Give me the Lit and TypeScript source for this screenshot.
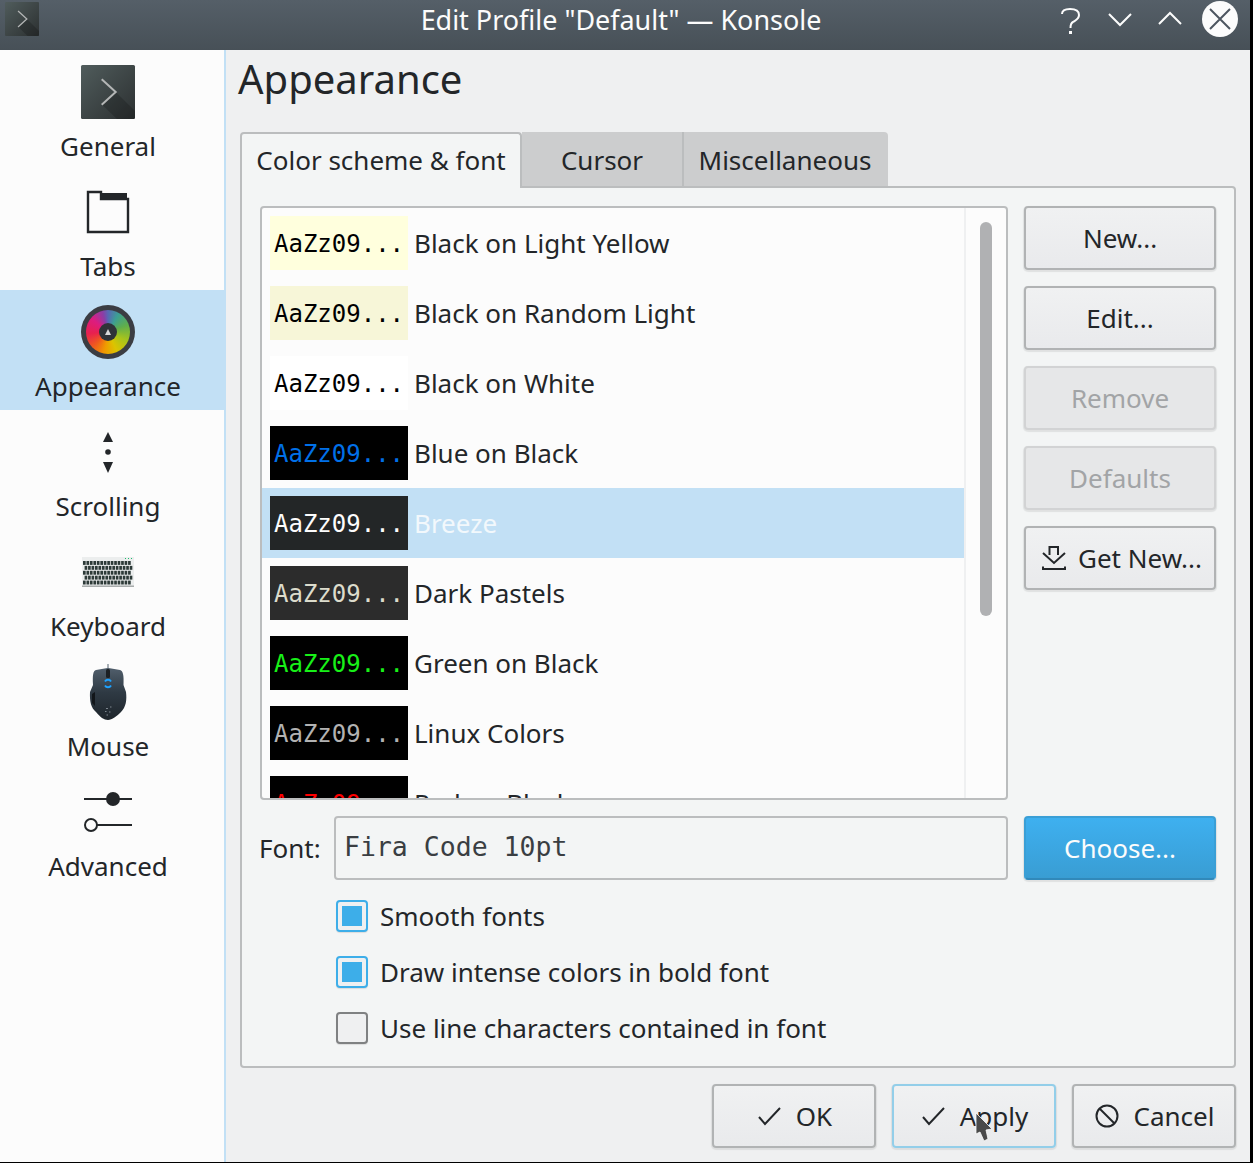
import { LitElement, html, css, svg } from 'lit';
import { customElement } from 'lit/decorators.js';
import { classMap } from 'lit/directives/class-map.js';

const schemes = [
  { name: 'Black on Light Yellow', bg: '#ffffdd', fg: '#000000' },
  { name: 'Black on Random Light', bg: '#f7f6d8', fg: '#000000' },
  { name: 'Black on White', bg: '#ffffff', fg: '#000000' },
  { name: 'Blue on Black', bg: '#000000', fg: '#0070e8' },
  { name: 'Breeze', bg: '#232627', fg: '#fcfcfc', selected: true },
  { name: 'Dark Pastels', bg: '#2c2c2c', fg: '#dcdccc' },
  { name: 'Green on Black', bg: '#000000', fg: '#18f018' },
  { name: 'Linux Colors', bg: '#000000', fg: '#b2b2b2' },
  { name: 'Red on Black', bg: '#000000', fg: '#ff0000' },
];

const check = html`<svg class="btn-icon" viewBox="0 0 24 24"><path d="M2 13L8 20L23 4" fill="none" stroke="#232629" stroke-width="2"/></svg>`;

const konsoleIcon = (cls: string) => html`<svg class=${cls} viewBox="0 0 54 54">
  <defs>
    <linearGradient id="konsole" x1="0" y1="0" x2="1" y2="1">
      <stop offset="0" stop-color="#505c5c"/>
      <stop offset="1" stop-color="#2c3031"/>
    </linearGradient>
  </defs>
  <rect width="54" height="54" rx="1.5" fill="url(#konsole)"/>
  <path d="M34.7 27L54 46V54H36L21 39.7Z" fill="#000" opacity=".18"/>
  <path d="M20.7 14.3L34.7 27L20.7 39.7" fill="none" stroke="#b4b6b6" stroke-width="2"/>
</svg>`;

// small keys of the keyboard icon, row by row
const keyRows = [0, 1, 2, 3, 4].map((row) => {
  const keys = [];
  const w = 52 / 15;
  const offset = row % 2 ? 1.6 : 0;
  for (let i = 0; i < 14; i++) {
    keys.push(svg`<rect x=${2 + offset + i * w} y=${16 + row * 4.9} width=${w - 0.8} height="3.9" fill="#2d3a38"/>`);
  }
  return keys;
});

const icons: Record<string, unknown> = {
  general: konsoleIcon('icon'),
  tabs: html`<svg class="icon" viewBox="0 0 54 54">
    <path d="M7 7H20V14H47V47H7Z" fill="#fcfcfc" stroke="#232629" stroke-width="2.4"/>
    <rect x="20" y="8" width="26" height="7" fill="#232629"/>
  </svg>`,
  appearance: html`<div class="wheel"><div class="wheel-ring"></div><div class="wheel-hub"><i class="wheel-mark"></i></div></div>`,
  scrolling: html`<svg class="icon" viewBox="0 0 54 54" fill="#232629">
    <path d="M27 7L22 17H32Z"/>
    <circle cx="27" cy="27" r="2.8"/>
    <path d="M22 37H32L27 48Z"/>
  </svg>`,
  keyboard: html`<svg class="icon" viewBox="0 0 54 54">
    <rect x="1" y="12" width="52" height="30" fill="#eceeee"/>
    <rect x="1" y="40.5" width="52" height="1.5" fill="#a8acac"/>
    ${keyRows}
    <rect x="44" y="13" width="1" height="1" fill="#1abc6c"/>
    <rect x="47" y="13" width="1" height="1" fill="#1abc6c"/>
    <rect x="50" y="13" width="1" height="1" fill="#1abc6c"/>
  </svg>`,
  mouse: html`<svg class="icon" viewBox="0 0 54 54">
    <defs>
      <linearGradient id="mouse" x1="0" y1="0" x2="0" y2="1">
        <stop offset="0" stop-color="#566472"/>
        <stop offset=".5" stop-color="#2f3a44"/>
        <stop offset="1" stop-color="#1e252b"/>
      </linearGradient>
    </defs>
    <path d="M26.5 -1V3L15 5C12 6 11.500 10 12 20L9 27C8.500 36 10 43 15 47C19 52 23 55 27 55C31 55 36 51 40 47C45 42 46 35 45 27L42.500 20C43 10 42 6 39 5L27.500 3V-1Z" fill="url(#mouse)"/>
    <rect x="25" y="4" width="4" height="9" rx="1.500" fill="#1c2024"/>
    <path d="M24 16.500A3.500 3.500 0 0 1 30 16.500M30 20.500A3.500 3.500 0 0 1 24 20.500" fill="none" stroke="#1ea2ff" stroke-width="2"/>
    <path d="M11 29L14 27V41L11 38Z" fill="#12161a"/>
    <path d="M25 43.500h2M29 42h1.500M24 46.500h1.500M28 47h1.500M25.500 50h1.500" stroke="#7c858d" stroke-width="1.200" fill="none"/>
  </svg>`,
  advanced: html`<svg class="icon" viewBox="0 0 54 54" fill="none" stroke="#232629" stroke-width="2">
    <path d="M3 14H51"/>
    <circle cx="32" cy="14" r="7" fill="#232629" stroke="none"/>
    <path d="M16 40H51"/>
    <circle cx="10" cy="40" r="6"/>
  </svg>`,
};

const pages = [
  ['general', 'General'],
  ['tabs', 'Tabs'],
  ['appearance', 'Appearance'],
  ['scrolling', 'Scrolling'],
  ['keyboard', 'Keyboard'],
  ['mouse', 'Mouse'],
  ['advanced', 'Advanced'],
];

@customElement('app-root')
export class AppRoot extends LitElement {
  static styles = css`
    :host {
      display: block;
      width: 1253px;
      height: 1163px;
      background: #000;
      overflow: hidden;
      font-family: 'Noto Sans', sans-serif;
      font-size: 26px;
      color: #232629;
    }

    .window {
      position: relative;
      width: 1250px;
      height: 1162px;
      display: flex;
      flex-direction: column;
      background: #eff0f1;
    }

    .titlebar {
      height: 50px;
      flex: none;
      display: grid;
      grid-template-columns: 200px 1fr 208px;
      background: linear-gradient(#555f68, #475057);
      color: #fcfcfc;
    }

    .title {
      font-size: 26.94px;
      text-align: center;
      line-height: 40px;
      white-space: nowrap;
    }

    .tb-left {
      padding: 2px 0 0 5px;
    }

    .tb-icon {
      display: block;
      width: 34px;
      height: 34px;
    }

    .tb-right {
      display: flex;
      justify-content: flex-end;
      align-items: flex-start;
      gap: 14px;
      padding: 1px 12px 0 0;
    }

    .tb-btn {
      display: block;
      width: 36px;
      height: 36px;
    }

    .body {
      flex: 1;
      display: flex;
      min-height: 0;
    }

    .sidebar {
      width: 224px;
      flex: none;
      background: #fcfcfc;
      border-right: 2px solid #c2e0f5;
    }

    .side-item {
      height: 120px;
      box-sizing: border-box;
      padding: 15px 8px 0 0;
      display: flex;
      flex-direction: column;
      align-items: center;
    }

    .side-item.current {
      background: #c2e0f5;
      margin-right: -2px;
      padding-right: 10px;
    }

    .side-label {
      margin-top: 9px;
      line-height: 36px;
    }

    .icon {
      display: block;
      width: 54px;
      height: 54px;
      overflow: visible;
    }

    .wheel {
      position: relative;
      width: 54px;
      height: 54px;
      border-radius: 50%;
      background: #3b3d43;
      display: grid;
      place-items: center;
    }

    .wheel-ring {
      grid-area: 1 / 1;
      width: 44px;
      height: 44px;
      border-radius: 50%;
      background: conic-gradient(#5867b4, #3c9f94 30deg, #5fae4c 70deg, #a8c41c 115deg, #dcc400 155deg, #f09a00 190deg, #ef5a1e 225deg, #e8204e 265deg, #dc1c80 310deg, #8a3ea6 345deg, #5867b4);
    }

    .wheel-hub {
      grid-area: 1 / 1;
      width: 18px;
      height: 18px;
      border-radius: 50%;
      background: #2f3338;
      display: grid;
      place-items: center;
    }

    .wheel-mark {
      width: 0;
      height: 0;
      border-left: 3px solid transparent;
      border-right: 3px solid transparent;
      border-bottom: 6px solid #d8d8d8;
    }

    .main {
      flex: 1;
      min-width: 0;
      padding: 0 14px;
      display: flex;
      flex-direction: column;
    }

    .heading {
      height: 82px;
      flex: none;
      margin-left: -2px;
      font-size: 40px;
      line-height: 58px;
    }

    .tabs {
      display: flex;
      height: 54px;
      flex: none;
    }

    .tab {
      box-sizing: border-box;
      background: #cccdce;
      line-height: 56px;
      text-align: center;
      white-space: nowrap;
    }

    .tab.cursor {
      width: 160px;
    }

    .tab.misc {
      width: 206px;
      padding-right: 2px;
      border-left: 2px solid #bbbdbe;
      border-radius: 0 4px 0 0;
    }

    .tab.active {
      width: 282px;
      height: 56px;
      position: relative;
      z-index: 1;
      background: #f3f5f5;
      border: 2px solid #bbbdbe;
      border-bottom: none;
      border-radius: 4px 4px 0 0;
      line-height: 52px;
    }

    .pane {
      height: 882px;
      flex: none;
      box-sizing: border-box;
      padding: 18px;
      background: #f3f5f5;
      border: 2px solid #bbbdbe;
      border-radius: 0 4px 4px 4px;
      display: flex;
      flex-direction: column;
    }

    .top-row {
      display: flex;
      gap: 16px;
      height: 594px;
    }

    .list {
      width: 748px;
      box-sizing: border-box;
      background: #fcfcfc;
      border: 2px solid #bbbdbe;
      border-radius: 4px;
      display: flex;
      overflow: hidden;
    }

    .rows {
      width: 702px;
      flex: none;
      overflow: hidden;
    }

    .row {
      height: 70px;
      display: flex;
      align-items: center;
      gap: 6px;
      padding-left: 8px;
    }

    .row.selected {
      background: #c2e0f5;
      color: #f2f8fc;
    }

    .swatch {
      width: 138px;
      height: 54px;
      box-sizing: border-box;
      padding-left: 4px;
      font-family: 'DejaVu Sans Mono', monospace;
      font-size: 24px;
      line-height: 56px;
      white-space: pre;
    }

    .scroll {
      flex: 1;
      border-left: 2px solid #eff0f1;
      padding: 14px 0 0 14px;
    }

    .thumb {
      width: 12px;
      height: 394px;
      border-radius: 6px;
      background: #b0b1b3;
    }

    .side-btns {
      width: 192px;
      display: flex;
      flex-direction: column;
      gap: 16px;
    }

    .btn {
      height: 64px;
      box-sizing: border-box;
      border: 2px solid #b1b3b4;
      border-radius: 4px;
      background: linear-gradient(#f0f1f2, #e9eaec);
      box-shadow: 0 1px 1px 1px rgba(0, 0, 0, 0.08);
      display: flex;
      align-items: center;
      justify-content: center;
      gap: 15px;
      white-space: nowrap;
    }

    .btn.tight {
      gap: 12px;
      padding-left: 4px;
    }

    .btn.disabled {
      border-color: #d2d3d4;
      background: #e6e7e8;
      color: #a2a4a6;
    }

    .btn.primary {
      border-color: #3a9fd6;
      border-bottom-color: #3189ba;
      background: linear-gradient(#3eb0f0, #399dd3);
      color: #fcfcfc;
      width: 192px;
      flex: none;
    }

    .btn.focus {
      border-color: #93cee9;
    }

    .btn-icon {
      display: block;
      width: 24px;
      height: 24px;
      flex: none;
    }

    .font-row {
      display: flex;
      align-items: center;
      gap: 16px;
      margin-top: 16px;
    }

    .font-label {
      width: 58px;
      margin-left: -1px;
      margin-right: 1px;
    }

    .font-field {
      flex: 1;
      height: 64px;
      box-sizing: border-box;
      border: 2px solid #bbbdbe;
      border-radius: 4px;
      padding-left: 8px;
      font-family: 'DejaVu Sans Mono', monospace;
      font-size: 26.5px;
      line-height: 58px;
      white-space: pre;
      color: #3a3e42;
    }

    .checks {
      display: flex;
      flex-direction: column;
      gap: 24px;
      margin-top: 20px;
      padding-left: 76px;
    }

    .check {
      display: flex;
      align-items: center;
      gap: 12px;
      height: 32px;
      white-space: nowrap;
    }

    .box {
      width: 32px;
      height: 32px;
      flex: none;
      box-sizing: border-box;
      border: 2px solid #7f8182;
      border-radius: 4px;
      background: #eff0f1;
      box-shadow: 0 1px 1px rgba(0, 0, 0, 0.1);
      display: grid;
      place-items: center;
    }

    .box.on {
      border-color: #3daee9;
    }

    .box.on::after {
      content: '';
      width: 20px;
      height: 20px;
      background: #3daee9;
    }

    .footer {
      display: flex;
      justify-content: flex-end;
      gap: 16px;
      margin-top: 16px;
    }

    .footer .btn {
      width: 164px;
      padding-left: 1px;
    }

    .cursor-arrow {
      position: absolute;
      left: 975px;
      top: 1112px;
      width: 18px;
      height: 31px;
    }
  `;

  render() {
    return html`
      <div class="window">
        <div class="titlebar">
          <div class="tb-left">${konsoleIcon('tb-icon')}</div>
          <div class="title">Edit Profile "Default" — Konsole</div>
          <div class="tb-right">
            <svg class="tb-btn" viewBox="0 0 36 36" fill="none" stroke="#fcfcfc" stroke-width="2">
              <path d="M10 13C10 9 13 8 18 8C24 8 27 10 27 14C27 18 24 19 21 21C19 22 18.500 24 18.500 27"/>
              <rect x="17" y="30" width="3" height="3" fill="#fcfcfc" stroke="none"/>
            </svg>
            <svg class="tb-btn" viewBox="0 0 36 36" fill="none" stroke="#fcfcfc" stroke-width="2"><path d="M7 13L18 24L29 13"/></svg>
            <svg class="tb-btn" viewBox="0 0 36 36" fill="none" stroke="#fcfcfc" stroke-width="2"><path d="M7 23L18 12L29 23"/></svg>
            <svg class="tb-btn" viewBox="0 0 36 36">
              <circle cx="18" cy="18" r="18" fill="#fcfcfc"/>
              <path d="M8 8L28 28M28 8L8 28" stroke="#4d5660" stroke-width="2"/>
            </svg>
          </div>
        </div>
        <div class="body">
          <div class="sidebar">
            ${pages.map(([id, label]) => html`
              <div class="side-item ${classMap({ current: id === 'appearance' })}">
                ${icons[id]}
                <div class="side-label">${label}</div>
              </div>
            `)}
          </div>
          <div class="main">
            <div class="heading">Appearance</div>
            <div class="tabs">
              <div class="tab active">Color scheme &amp; font</div>
              <div class="tab cursor">Cursor</div>
              <div class="tab misc">Miscellaneous</div>
            </div>
            <div class="pane">
              <div class="top-row">
                <div class="list">
                  <div class="rows">
                    ${schemes.map((s) => html`
                      <div class="row ${classMap({ selected: !!s.selected })}">
                        <div class="swatch" style="background:${s.bg};color:${s.fg}">AaZz09...</div>
                        <div>${s.name}</div>
                      </div>
                    `)}
                  </div>
                  <div class="scroll"><div class="thumb"></div></div>
                </div>
                <div class="side-btns">
                  <div class="btn">New...</div>
                  <div class="btn">Edit...</div>
                  <div class="btn disabled">Remove</div>
                  <div class="btn disabled">Defaults</div>
                  <div class="btn tight">
                    <svg class="btn-icon" viewBox="0 0 24 24" fill="none" stroke="#232629" stroke-width="2">
                      <path d="M7.500 9V1H16V9M1 7L12 17L23 7M1 20.500V23H23V20.500"/>
                    </svg>
                    Get New...
                  </div>
                </div>
              </div>
              <div class="font-row">
                <div class="font-label">Font:</div>
                <div class="font-field">Fira Code 10pt</div>
                <div class="btn primary">Choose...</div>
              </div>
              <div class="checks">
                <div class="check"><div class="box on"></div>Smooth fonts</div>
                <div class="check"><div class="box on"></div>Draw intense colors in bold font</div>
                <div class="check"><div class="box"></div>Use line characters contained in font</div>
              </div>
            </div>
            <div class="footer">
              <div class="btn">${check}OK</div>
              <div class="btn focus">${check}Apply</div>
              <div class="btn">
                <svg class="btn-icon" viewBox="0 0 24 24" fill="none" stroke="#232629" stroke-width="2">
                  <circle cx="12" cy="12" r="10.500"/>
                  <path d="M4.500 4.500L19.500 19.500"/>
                </svg>
                Cancel
              </div>
            </div>
          </div>
        </div>
        <svg class="cursor-arrow" viewBox="0 0 18 31">
          <path d="M1 1L17 17L11 18L13 27L9 29L5 20L1 22Z" fill="#4a4a4a" stroke="#fcfcfc" stroke-width="0.8"/>
        </svg>
      </div>
    `;
  }
}
